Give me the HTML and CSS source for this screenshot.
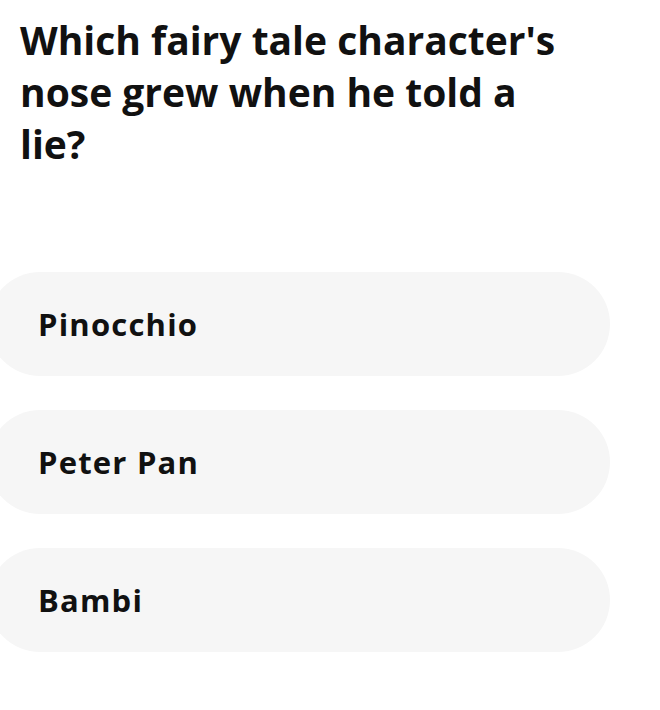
FILE: index.html
```html
<!DOCTYPE html>
<html>
<head>
<meta charset="utf-8">
<link rel="stylesheet" href="styles.css">
</head>
<body>
<main class="quiz">
  <h1 class="question">Which fairy tale character's nose grew when he told a lie?</h1>
  <div class="options">
    <div class="option">Pinocchio</div>
    <div class="option">Peter Pan</div>
    <div class="option">Bambi</div>
  </div>
</main>
</body>
</html>
```
FILE: styles.css
```css
html, body {
  margin: 0;
  padding: 0;
  background: #ffffff;
}
body {
  width: 660px;
  height: 710px;
  overflow: hidden;
  font-family: "Open Sans", "Lato", sans-serif;
  color: #111111;
}
.quiz {
  display: flex;
  flex-direction: column;
}
.question {
  margin: 14px 0 0 20px;
  width: 545px;
  font-size: 39px;
  line-height: 52px;
  font-weight: 700;
}
.options {
  display: flex;
  flex-direction: column;
  gap: 34px;
  margin-top: 102px;
  margin-left: -12px;
  width: 622px;
}
.option {
  height: 104px;
  border-radius: 52px;
  background: #f6f6f6;
  display: flex;
  align-items: center;
  padding-left: 50px;
  font-size: 31px;
  letter-spacing: 1.2px;
  font-weight: 700;
}
```
